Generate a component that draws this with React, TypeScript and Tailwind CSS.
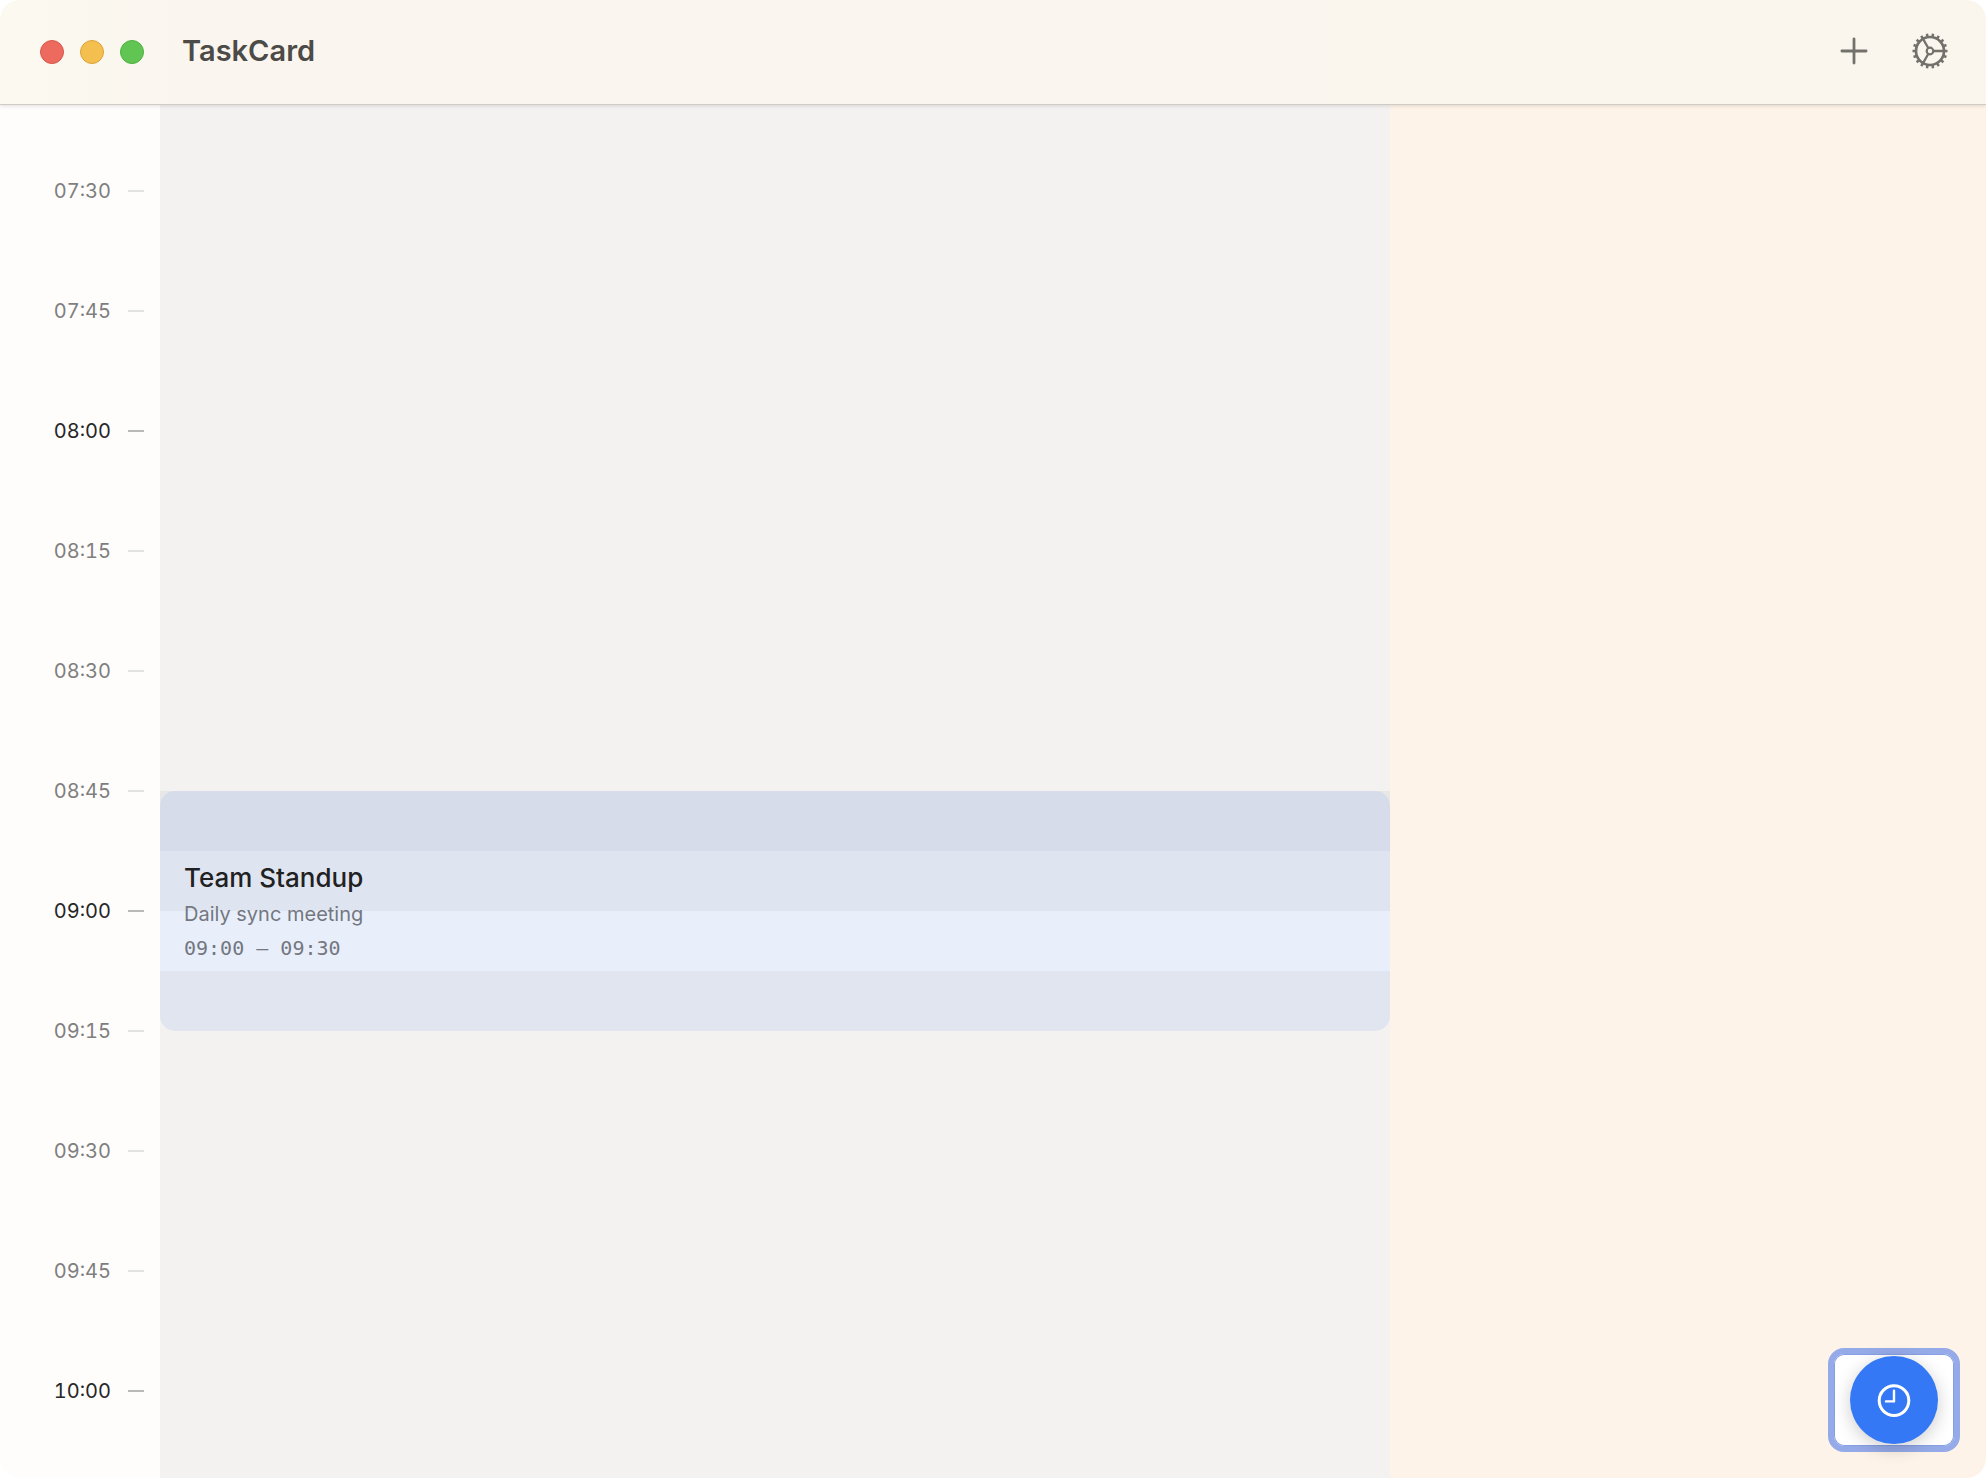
import React from "react";

interface Tick {
  label: string;
  hour: boolean;
}

interface CalendarEvent {
  title: string;
  description: string;
  start: string;
  end: string;
}

const START_MINUTES = 7 * 60 + 30;
const TICK_COUNT = 11;

const ticks: Tick[] = Array.from({ length: TICK_COUNT }, (_, i) => {
  const total = START_MINUTES + i * 15;
  const hours = String(Math.floor(total / 60)).padStart(2, "0");
  const minutes = String(total % 60).padStart(2, "0");
  return { label: `${hours}:${minutes}`, hour: total % 60 === 0 };
});

const standup: CalendarEvent = {
  title: "Team Standup",
  description: "Daily sync meeting",
  start: "09:00",
  end: "09:30",
};

const GearIcon: React.FC = () => {
  // a tooth sits at 3 o'clock, in line with the horizontal spoke
  const teeth = Array.from({ length: 18 }, (_, i) => i * 20 + 10);
  return (
    <svg width="36" height="36" viewBox="0 0 36 36" fill="none" stroke="currentColor" strokeWidth="2.7">
      <circle cx="18" cy="18" r="14" />
      <circle cx="18" cy="18" r="3.3" strokeWidth="2.2" />
      {teeth.map((angle) => (
        <path key={angle} d="M18 4V0.5" strokeWidth="2.5" transform={`rotate(${angle} 18 18)`} />
      ))}
      {[90, 210, 330].map((angle) => (
        <path key={angle} d="M18 14.5V3.5" strokeWidth="2.3" transform={`rotate(${angle} 18 18)`} />
      ))}
    </svg>
  );
};

const PlusIcon: React.FC = () => (
  <svg width="28" height="28" viewBox="0 0 28 28" fill="none" stroke="currentColor" strokeWidth="2.8" strokeLinecap="round">
    <path d="M14 1.9V26.1M1.9 14H26.1" />
  </svg>
);

const ClockIcon: React.FC = () => (
  <svg width="34" height="34" viewBox="0 0 34 34" fill="none" stroke="currentColor" strokeLinecap="round" strokeLinejoin="round">
    <circle cx="17" cy="17.6" r="14.8" strokeWidth="3" />
    <path d="M17 7.8V18.4H9" strokeWidth="2.4" />
  </svg>
);

const TitleBar: React.FC = () => (
  <header className="z-10 flex h-[105px] shrink-0 items-center border-b border-[#d0cbc5] bg-linear-to-r from-[#fbf9f0] via-[#faf6ef] via-10% to-[#faf6ee] pr-[38px] pl-10 shadow-[0_1px_4px_rgba(0,0,0,0.12)]">
    <div className="flex gap-4">
      <button aria-label="Close" className="size-6 rounded-full border border-[#d9574c] bg-[#ec6a5e]" />
      <button aria-label="Minimize" className="size-6 rounded-full border border-[#dba43c] bg-[#f4bf4f]" />
      <button aria-label="Zoom" className="size-6 rounded-full border border-[#4fb03f] bg-[#61c554]" />
    </div>
    <h1 className="ml-[38px] pb-0.5 text-[29px] leading-9 font-semibold text-[#4c4b48]">TaskCard</h1>
    <div className="ml-auto flex items-center gap-11 pb-0.5 text-[#73716c]">
      <button aria-label="Add task">
        <PlusIcon />
      </button>
      <button aria-label="Settings">
        <GearIcon />
      </button>
    </div>
  </header>
);

const TimeRuler: React.FC = () => (
  <ol className="w-40 shrink-0 bg-[#fefdfb] pt-[26px]">
    {ticks.map((tick) => (
      <li
        key={tick.label}
        className={`flex h-[120px] items-center justify-end gap-[17px] pr-4 text-xl tabular-nums ${
          tick.hour ? "text-[#262626]" : "text-[#7f7f7e]"
        }`}
      >
        <time>{tick.label}</time>
        <span className={`h-[2px] w-4 ${tick.hour ? "bg-[#b9b9b8]" : "bg-[#e2e2e0]"}`} />
      </li>
    ))}
  </ol>
);

const Schedule: React.FC<{ event: CalendarEvent }> = ({ event }) => (
  <section className="grid min-w-0 flex-1 auto-rows-[60px] content-start bg-[#f3f2f0] pt-[26px]">
    {/* highlighted slot under the card */}
    <div className="col-start-1 row-start-12 bg-[#e7e7e5]" />
    <article className="col-start-1 row-span-4 row-start-12 grid grid-rows-4 overflow-hidden rounded-[15px]">
      <div className="col-start-1 row-start-1 bg-[#d6dce9]" />
      <div className="col-start-1 row-start-2 bg-[#dfe5f0]" />
      <div className="col-start-1 row-start-3 bg-[#e8effb]" />
      <div className="col-start-1 row-start-4 bg-[#e1e5f0]" />
      <div className="col-start-1 row-span-4 row-start-1 flex flex-col justify-center gap-1 px-6 pt-0.5 text-[#74777f]">
        <h2 className="text-[26px] leading-8 font-medium text-[#1f2123]">{event.title}</h2>
        <p className="text-xl leading-8">{event.description}</p>
        <p className="font-['DejaVu_Sans_Mono',monospace] text-xl leading-7">
          {event.start} – {event.end}
        </p>
      </div>
    </article>
  </section>
);

const App: React.FC = () => {
  return (
    <div className="h-screen bg-white font-['Inter',sans-serif]">
      <div className="flex h-full flex-col overflow-hidden rounded-[20px]">
        <TitleBar />
        <main className="flex min-h-0 flex-1">
          <TimeRuler />
          <Schedule event={standup} />
          <aside className="w-[30%] shrink-0 bg-[#fdf3e8]" />
        </main>
      </div>
      <button
        aria-label="Jump to current time"
        className="fixed right-[26px] bottom-[26px] z-20 flex h-[104px] w-[132px] items-center justify-center rounded-2xl border-[6px] border-[#95aae8] bg-white text-white shadow-[inset_0_0_0_1px_#879fe3]"
      >
        <span className="flex size-[88px] shrink-0 items-center justify-center rounded-full bg-[#3478f6] shadow-[0_4px_18px_rgba(0,0,0,0.2)]">
          <ClockIcon />
        </span>
      </button>
    </div>
  );
};

export default App;
